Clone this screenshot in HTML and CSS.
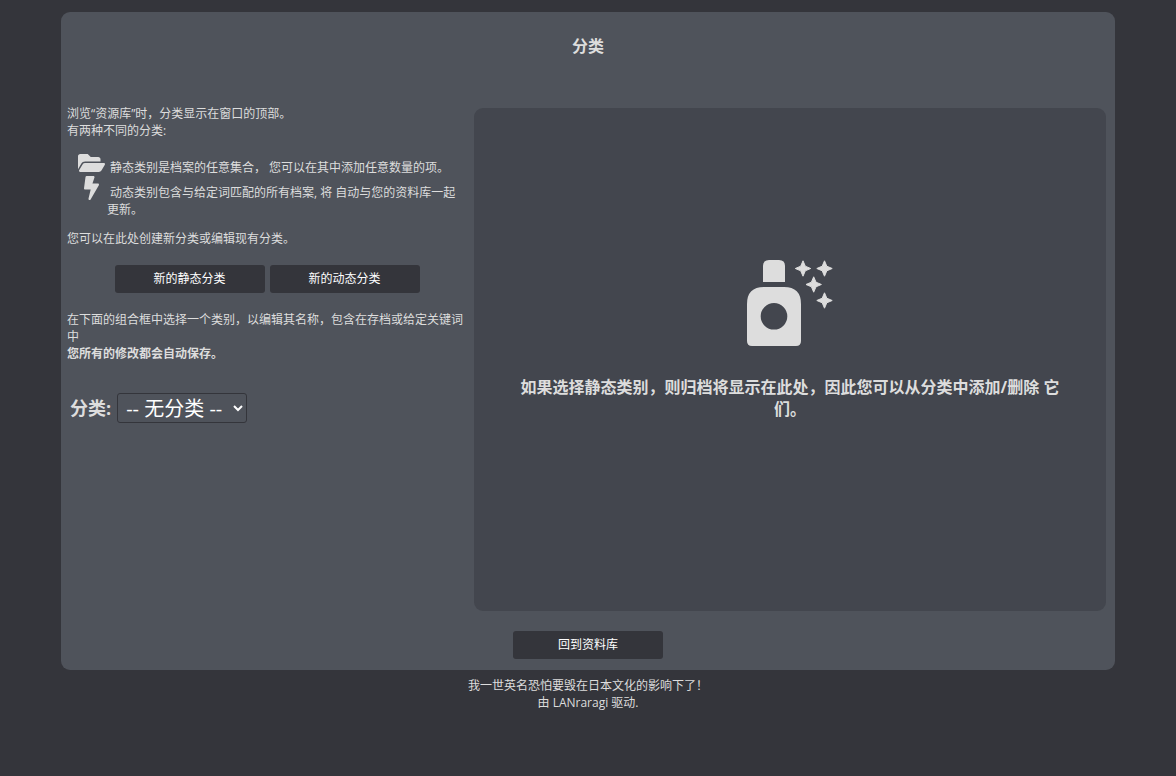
FILE: index.html
```html
<!DOCTYPE html>
<html lang="zh-CN">
<head>
<meta charset="utf-8">
<meta name="viewport" content="width=device-width, initial-scale=1">
<title>分类</title>
<link rel="stylesheet" href="styles.css">
</head>
<body>
<main class="panel">
  <h1 class="title">分类</h1>
  <div class="columns">
    <section class="settings">
      <p class="text">浏览“资源库”时，分类显示在窗口的顶部。<br>有两种不同的分类:</p>
      <ul class="kinds">
        <li class="kind">
          <svg class="kind-icon" viewBox="0 0 576 512" width="27" height="24" aria-hidden="true"><path d="M572.694 292.093L500.27 416.248A63.997 63.997 0 0 1 444.989 448H45.025c-18.523 0-30.064-20.093-20.731-36.093l72.424-124.155A64 64 0 0 1 152 256h399.964c18.523 0 30.064 20.093 20.73 36.093zM152 224h328v-48c0-26.51-21.49-48-48-48H272l-64-64H48C21.49 64 0 85.49 0 112v278.046l69.077-118.418C86.214 242.25 117.989 224 152 224z"/></svg>
          <span class="kind-text">静态类别是档案的任意集合， 您可以在其中添加任意数量的项。</span>
        </li>
        <li class="kind">
          <svg class="kind-icon" viewBox="0 0 320 512" width="15" height="24" aria-hidden="true"><path d="M296 160H180.6l42.6-129.8C227.2 15 215.7 0 200 0H56C44 0 33.8 8.9 32.2 20.8l-32 240C-1.7 275.2 9.5 288 24 288h118.7L96.6 482.5c-3.6 15.2 8 29.5 23.3 29.5 8.4 0 16.4-4.4 20.8-12l176-304c9.3-15.9-2.2-36-20.7-36z"/></svg>
          <span class="kind-text">动态类别包含与给定词匹配的所有档案, 将 自动与您的资料库一起更新。</span>
        </li>
      </ul>
      <p class="text">您可以在此处创建新分类或编辑现有分类。</p>
      <div class="actions">
        <button class="button" type="button">新的静态分类</button>
        <button class="button" type="button">新的动态分类</button>
      </div>
      <p class="text">在下面的组合框中选择一个类别，以编辑其名称，包含在存档或给定关键词中<br><b>您所有的修改都会自动保存。</b></p>
      <div class="picker">
        <label class="picker-label" for="category">分类:</label>
        <select class="picker-select" id="category"><option>-- 无分类 --</option></select>
      </div>
    </section>
    <section class="archives">
      <svg class="bottle" viewBox="0 0 86 86" width="86" height="86" aria-hidden="true">
        <path d="M16 22V6q0-6 6-6h10q6 0 6 6v16z"/>
        <path fill-rule="evenodd" d="M0 44Q0 27 17 27H37Q54 27 54 44V81q0 5-5 5H5q-5 0-5-5zM27 43a13.300 13.300 0 1 0 0 26.600a13.300 13.300 0 1 0 0-26.600z"/>
        <g class="stars">
          <path d="M56 .8l2.300 5.400 5.400 2.300-5.400 2.300-2.300 5.400-2.300-5.400-5.400-2.300 5.400-2.300z"/>
          <path d="M77.500.8l2.300 5.400 5.400 2.300-5.400 2.300-2.300 5.400-2.300-5.400-5.400-2.300 5.400-2.300z"/>
          <path d="M66.700 16.800l2.300 5.400 5.400 2.300-5.400 2.300-2.300 5.400-2.300-5.400-5.400-2.300 5.400-2.300z"/>
          <path d="M77.500 32.800l2.300 5.400 5.400 2.300-5.400 2.300-2.300 5.400-2.300-5.400-5.400-2.300 5.400-2.300z"/>
        </g>
      </svg>
      <h2 class="hint">如果选择静态类别，则归档将显示在此处，因此您可以从分类中添加/删除 它们。</h2>
    </section>
  </div>
  <div class="actions actions-bottom">
    <button class="button" type="button">回到资料库</button>
  </div>
</main>
<footer class="footer">
  <p class="text">我一世英名恐怕要毁在日本文化的影响下了！</p>
  <p class="text">由 LANraragi 驱动.</p>
</footer>
</body>
</html>
```
FILE: styles.css
```css
* {
  box-sizing: border-box;
}

body {
  margin: 0;
  padding: 12px 8px;
  background: #34353b;
  color: #dddddd;
  font: 12px/17px "Open Sans", "Noto Sans CJK SC", sans-serif;
}

.panel {
  width: calc(90% + 10px);
  margin: 0 auto;
  padding: 23px 6px 11px;
  border-radius: 9px;
  background: #4f535b;
}

.title,
.hint {
  margin: 0;
  font-size: 16px;
  line-height: 22px;
  text-align: center;
}

.columns {
  display: grid;
  grid-template-columns: 400fr 632fr;
  gap: 7px;
  margin-top: 48px;
  padding-right: 3px;
}

.text {
  margin: 0;
}

.kinds {
  margin: 12px 0;
  padding: 0;
  list-style: none;
}

.kind {
  display: grid;
  grid-template-columns: 32px 1fr;
  padding-left: 8px;
}

.kind-icon {
  justify-self: center;
  fill: currentColor;
}

.kind-text {
  padding: 8px 8px 0 0;
  text-indent: 3px;
}

.actions {
  display: flex;
  justify-content: center;
  gap: 5px;
  margin: 18px 0;
}

.actions-bottom {
  margin: 20px 0 0;
}

.button {
  width: 150px;
  height: 28px;
  padding: 0 0 2px;
  border: 0;
  border-radius: 3px;
  background: #34353b;
  color: #ffffff;
  font: inherit;
}

.picker {
  display: flex;
  align-items: center;
  gap: 6px;
  margin-top: 31px;
  padding-left: 3px;
}

.picker-label {
  font-size: 18px;
  font-weight: bold;
  line-height: 30px;
}

.picker-select {
  width: 130px;
  height: 30px;
  padding: 0 2px 2px 4px;
  border: 1px solid #34353b;
  border-radius: 3px;
  background: #4f535b;
  color: #ffffff;
  font: inherit;
  font-size: 20px;
}

.archives {
  display: flex;
  flex-direction: column;
  align-items: center;
  min-height: 503px;
  margin-top: 3px;
  padding: 152px 40px 40px;
  border-radius: 9px;
  background: #43464e;
}

.bottle {
  fill: currentColor;
}

.stars {
  stroke: currentColor;
  stroke-width: 1;
  stroke-linejoin: round;
}

.hint {
  margin-top: 30px;
}

.footer {
  padding-top: 7px;
  text-align: center;
}
```
